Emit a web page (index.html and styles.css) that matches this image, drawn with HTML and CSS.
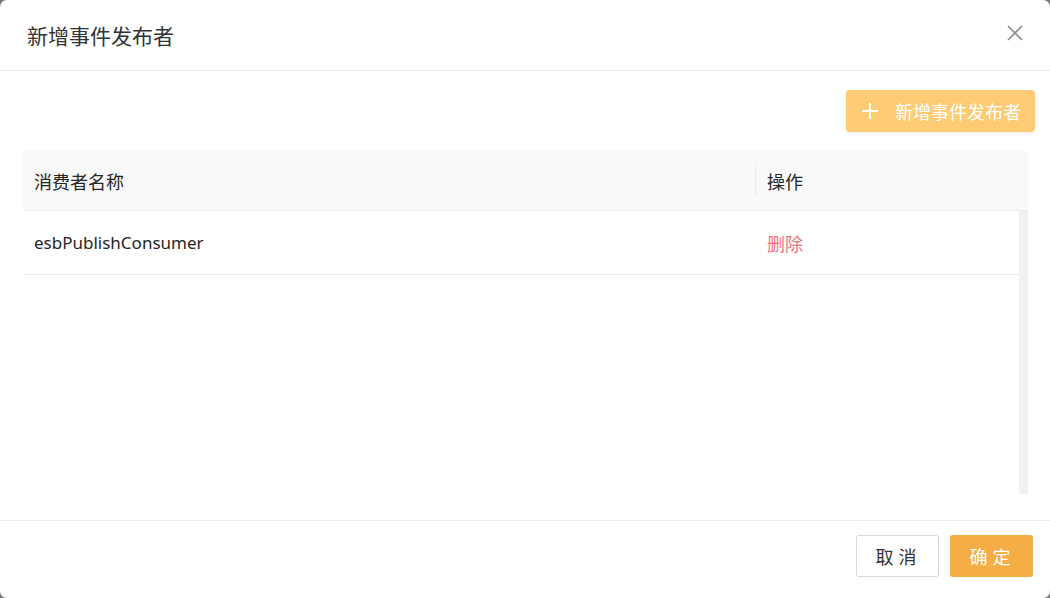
FILE: index.html
```html
<!DOCTYPE html>
<html lang="zh-CN">
<head>
  <meta charset="UTF-8">
  <meta name="viewport" content="width=device-width, initial-scale=1.0">
  <title>新增事件发布者</title>
  <link rel="stylesheet" href="styles.css">
</head>
<body>
  <div class="modal">
    <!-- 标题栏 -->
    <div class="modalHeader">
      <span class="modalTitle">新增事件发布者</span>
      <button class="closeButton" aria-label="关闭">
        <svg width="18" height="18" viewBox="0 0 18 18">
          <path d="M2 2L16 16M16 2L2 16" stroke="#8c8c8c" stroke-width="1.6" fill="none"/>
        </svg>
      </button>
    </div>

    <!-- 内容区 -->
    <div class="modalBody">
      <div class="toolbar">
        <button class="addButton">
          <svg width="18" height="18" viewBox="0 0 18 18">
            <path d="M9 1V17M1 9H17" stroke="#fff" stroke-width="2" fill="none"/>
          </svg>
          <span>新增事件发布者</span>
        </button>
      </div>

      <div class="tableWrap">
        <div class="tableHead">
          <div class="cell nameCol">消费者名称</div>
          <div class="cell actionCol"><span class="divider"></span>操作</div>
        </div>
        <div class="tableBody">
          <div class="rows">
            <div class="row">
              <div class="cell nameCol">esbPublishConsumer</div>
              <div class="cell actionCol"><a class="deleteLink">删除</a></div>
            </div>
          </div>
          <div class="scrollTrack"></div>
        </div>
      </div>
    </div>

    <!-- 底部按钮 -->
    <div class="modalFooter">
      <button class="btn cancelBtn">取消</button>
      <button class="btn okBtn">确定</button>
    </div>
  </div>
</body>
</html>
```

FILE: styles.css
```css
body {
  margin: 0;
  background-color: #7a7a7a;
  font-family: "Noto Sans", "Noto Sans CJK SC", sans-serif;
  color: #262626;
}

.modal {
  width: 1050px;
  height: 598px;
  background-color: #fff;
  border-radius: 7px;
  display: flex;
  flex-direction: column;
  overflow: hidden;
}

.modalHeader {
  height: 70px;
  border-bottom: 1px solid #ebebeb;
  display: flex;
  align-items: center;
  justify-content: space-between;
  padding: 0 26px 0 27px;
}
.modalTitle {
  font-size: 21px;
  color: #333;
}
.closeButton {
  border: none;
  background: none;
  padding: 0;
  display: flex;
  cursor: pointer;
  margin-top: -4px;
}

.modalBody {
  flex: 1;
  padding: 19px 15px 0 23px;
}
.toolbar {
  display: flex;
  justify-content: flex-end;
}
.addButton {
  height: 42px;
  width: 189px;
  border: none;
  border-radius: 4px;
  background-color: #ffcb74;
  color: #fff;
  font-family: inherit;
  font-size: 18px;
  display: flex;
  align-items: center;
  gap: 16px;
  padding: 0 0 0 15px;
  box-shadow: 0 2px 3px rgba(0, 0, 0, 0.06);
}

.tableWrap {
  margin-top: 19px;
  margin-right: 7px;
}
.tableHead {
  display: flex;
  height: 59px;
  background-color: #f9f9f9;
  border-bottom: 1px solid #ebebeb;
  font-size: 18px;
}
.cell {
  padding: 0 11px;
  display: flex;
  align-items: center;
}
.nameCol {
  width: 710px;
}
.actionCol {
  flex: 1;
  position: relative;
  padding-left: 12px;
}
.divider {
  position: absolute;
  left: 0;
  top: 15px;
  height: 29px;
  border-left: 1px solid #e8e8e8;
}

.tableBody {
  display: flex;
  height: 283px;
}
.rows {
  flex: 1;
}
.row {
  display: flex;
  height: 63px;
  border-bottom: 1px solid #ebebeb;
  font-size: 17px;
}
.deleteLink {
  color: #f0727e;
  font-size: 18px;
  cursor: pointer;
}
.scrollTrack {
  width: 9px;
  background-color: #f1f1f1;
}

.modalFooter {
  height: 78px;
  border-top: 1px solid #ebebeb;
  display: flex;
  justify-content: flex-end;
  align-items: flex-start;
  gap: 11px;
  padding: 14px 17px 0 0;
  box-sizing: border-box;
}
.btn {
  height: 42px;
  width: 83px;
  border-radius: 3px;
  font-family: inherit;
  font-size: 18px;
  letter-spacing: 5px;
  padding-left: 8px;
  cursor: pointer;
}
.cancelBtn {
  background-color: #fff;
  border: 1px solid #d9d9d9;
  color: #333;
}
.okBtn {
  background-color: #f5ad45;
  border: none;
  color: #fff;
}
```
